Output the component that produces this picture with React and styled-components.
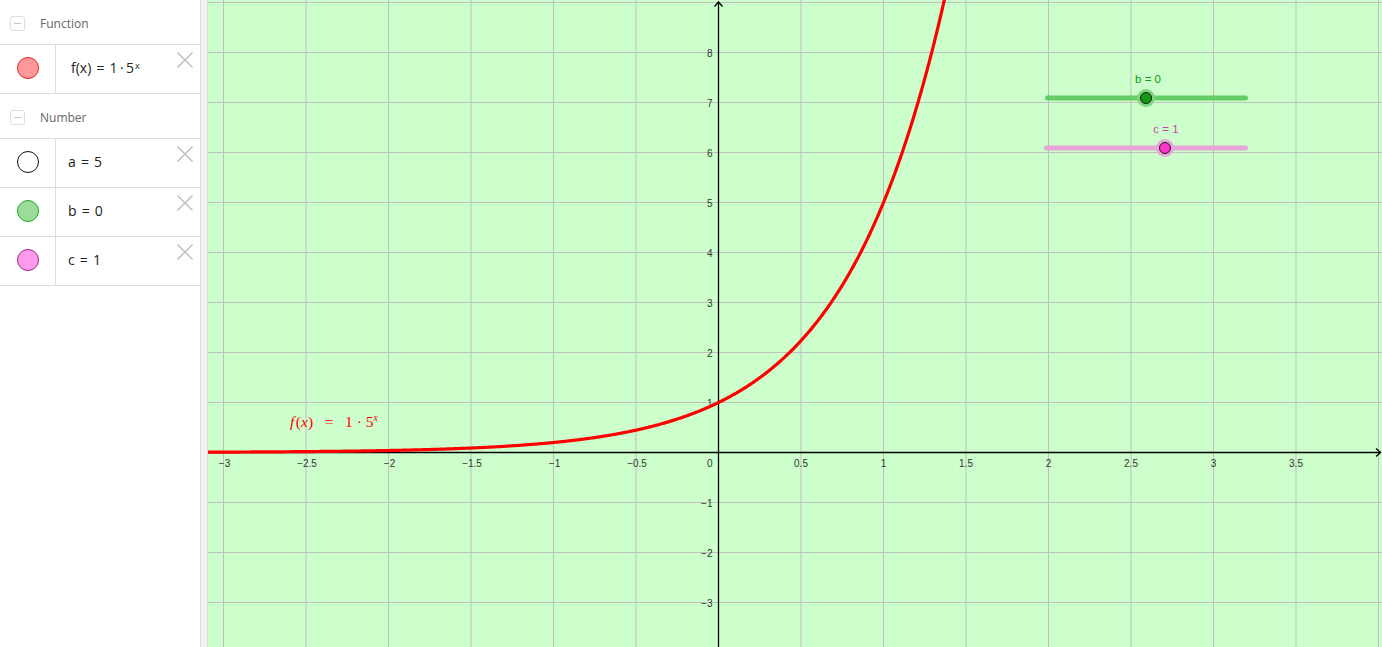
import styled, { createGlobalStyle } from "styled-components";

const GlobalStyle = createGlobalStyle`
  html, body {
    margin: 0;
    padding: 0;
    overflow: hidden;
    background: #ffffff;
  }
  * { box-sizing: border-box; }
`;

const Page = styled.div`
  display: flex;
  width: 100vw;
  height: 100vh;
  font-family: "Open Sans", "Liberation Sans", sans-serif;
`;

const Algebra = styled.div`
  width: 200px;
  flex-shrink: 0;
  background: #ffffff;
  display: flex;
  flex-direction: column;
`;

const Divider = styled.div`
  width: 8px;
  flex-shrink: 0;
  background: #f3f3f3;
  border-left: 1px solid #dcdcdc;
  border-right: 1px solid #dcdcdc;
`;

const GraphView = styled.div`
  flex: 1;
  background: #ccffcc;
  overflow: hidden;
`;

const GroupHeader = styled.div`
  height: 45px;
  display: flex;
  align-items: center;
  gap: 15px;
  padding: 2px 0 0 10px;
  border-bottom: 1px solid #dddddd;
  font-size: 12px;
  color: #666666;
`;

const Collapse = styled.span`
  width: 15px;
  height: 15px;
  border: 1px solid #dedede;
  border-radius: 3px;
  display: flex;
  align-items: center;
  justify-content: center;

  &::after {
    content: "";
    width: 7px;
    height: 1px;
    background: #c4c4c4;
  }
`;

const Item = styled.div`
  height: 49px;
  display: flex;
  border-bottom: 1px solid #dddddd;
  position: relative;
`;

const Marble = styled.div`
  width: 56px;
  flex-shrink: 0;
  border-right: 1px solid #dddddd;
  display: flex;
  align-items: flex-start;
  justify-content: center;
  padding-top: 12px;

  &::before {
    content: "";
    width: 20px;
    height: 20px;
    border-radius: 50%;
    background: ${(p) => p.$fill};
    border: 1px solid ${(p) => p.$stroke};
  }
`;

const Formula = styled.div`
  flex: 1;
  display: flex;
  align-items: center;
  padding: 0 0 4px ${(p) => p.$pad || 12}px;
  font-size: 14px;
  color: #222222;
  white-space: pre;
  word-spacing: 1.5px;

  sup {
    font-size: 9px;
    position: relative;
    top: -2px;
    margin-left: 1px;
  }
`;

const Delete = styled.button`
  position: absolute;
  top: 6px;
  right: 6px;
  width: 18px;
  height: 18px;
  padding: 0;
  border: none;
  background: none;
  display: flex;
`;

const CloseIcon = () => (
  <svg width="18" height="18" viewBox="0 0 18 18">
    <path d="M1.5 1.5 L16.5 16.5 M16.5 1.5 L1.5 16.5" stroke="#c2c2c2" strokeWidth="1.6" fill="none" />
  </svg>
);

const items = {
  fn: [{ id: "f", fill: "#ff9999", stroke: "#e22020", pad: 15, text: <>f(x) = 1{"\u2009·\u2009"}5<sup>x</sup></> }],
  num: [
    { id: "a", fill: "#ffffff", stroke: "#111111", text: "a = 5" },
    { id: "b", fill: "#99dd99", stroke: "#22aa22", text: "b = 0" },
    { id: "c", fill: "#ff99ee", stroke: "#a0208a", text: "c = 1" },
  ],
};

const Row = ({ item }) => (
  <Item>
    <Marble $fill={item.fill} $stroke={item.stroke} />
    <Formula $pad={item.pad}>{item.text}</Formula>
    <Delete aria-label="delete">
      <CloseIcon />
    </Delete>
  </Item>
);

// graph geometry (local to the graph view)
const W = 1174;
const H = 647;
const OX = 510.5;
const OY = 452.5;
const UX = 165;
const UY = 50;

const fmt = (v) => (v < 0 ? "\u2212" + String(-v) : String(v));

const curve = () => {
  const pts = [];
  for (let x = -3.2; x <= 1.4; x += 0.005) {
    const y = Math.pow(5, x);
    pts.push(`${(OX + x * UX).toFixed(2)},${(OY - y * UY).toFixed(2)}`);
  }
  return "M" + pts.join(" L");
};

const Slider = ({ x1, x2, y, px, label, line, halo, fill, color, lx }) => (
  <g>
    <line x1={x1} y1={y} x2={x2} y2={y} stroke={line} strokeWidth="5" strokeLinecap="round" />
    <circle cx={px} cy={y} r="9" fill={halo} />
    <circle cx={px} cy={y} r="5.5" fill={fill} stroke="#1a1a1a" strokeWidth="1" />
    <text x={lx} y={y - 15} textAnchor="middle" fontSize="11.5" fill={color} fontFamily="Liberation Sans, sans-serif">
      {label}
    </text>
  </g>
);

const Graph = () => {
  const vLines = [];
  for (let k = -7; k <= 8; k++) {
    const x = OX + k * (UX / 2);
    if (x > 0 && x < W && k !== 0) vLines.push({ x, v: k / 2 });
  }
  const hLines = [];
  for (let k = -3; k <= 9; k++) {
    const y = OY - k * UY;
    if (k !== 0) hLines.push({ y, v: k });
  }
  return (
    <svg width={W} height={H} viewBox={`0 0 ${W} ${H}`} style={{ display: "block" }}>
      <rect width={W} height={H} fill="#ccffcc" />
      {vLines.map((l) => (
        <line key={"v" + l.v} x1={l.x} y1="0" x2={l.x} y2={H} stroke="#c0c0c0" strokeWidth="1" />
      ))}
      {hLines.map((l) => (
        <line key={"h" + l.v} x1="0" y1={l.y} x2={W} y2={l.y} stroke="#c0c0c0" strokeWidth="1" />
      ))}
      <g stroke="#000" strokeWidth="1.3" fill="none">
        <line x1="0" y1={OY} x2={W - 1} y2={OY} />
        <line x1={OX} y1={H} x2={OX} y2="1.5" />
        <path d={`M${OX - 4} 6.5 L${OX} 2 L${OX + 4} 6.5`} />
        <path d={`M${W - 6} ${OY - 4} L${W - 1.5} ${OY} L${W - 6} ${OY + 4}`} />
      </g>
      <g fontSize="10" fill="#333" fontFamily="Liberation Sans, sans-serif">
        {vLines
          .filter((l) => l.v <= 3.5)
          .map((l) => (
            <text key={"tx" + l.v} x={l.x + (l.v < 0 ? 1 : 0)} y={OY + 14} textAnchor="middle">
              {fmt(l.v)}
            </text>
          ))}
        {hLines
          .filter((l) => l.v <= 8)
          .map((l) => (
            <text key={"ty" + l.v} x={OX - 6} y={l.y + 4} textAnchor="end">
              {fmt(l.v)}
            </text>
          ))}
        <text x={OX - 6} y={OY + 14} textAnchor="end">0</text>
      </g>
      <path d={curve()} stroke="#ff0000" strokeWidth="3.2" fill="none" strokeLinejoin="round" />
      <text x="82" y="427" fontSize="15.5" fill="#ff0000" fontFamily="Liberation Serif, serif" xmlSpace="preserve">
        <tspan fontStyle="italic">f</tspan>
        <tspan dx="1.5">(</tspan>
        <tspan fontStyle="italic">x</tspan>
        <tspan>)   =   1 · 5</tspan>
        <tspan fontStyle="italic" fontSize="10" dy="-6">x</tspan>
      </text>
      <Slider
        x1={839.5} x2={1037.5} y={98} px={938} lx={940}
        label="b = 0" line="#66cc66" halo="#7fd47f" fill="#139913" color="#119911"
      />
      <Slider
        x1={838.5} x2={1037.5} y={148} px={957} lx={958}
        label="c = 1" line="#e8a6d8" halo="#e8a6d8" fill="#ff33cc" color="#cc44aa"
      />
    </svg>
  );
};

export default function App() {
  return (
    <>
      <GlobalStyle />
      <Page>
        <Algebra>
          <GroupHeader>
            <Collapse />
            Function
          </GroupHeader>
          {items.fn.map((it) => (
            <Row key={it.id} item={it} />
          ))}
          <GroupHeader>
            <Collapse />
            Number
          </GroupHeader>
          {items.num.map((it) => (
            <Row key={it.id} item={it} />
          ))}
        </Algebra>
        <Divider />
        <GraphView>
          <Graph />
        </GraphView>
      </Page>
    </>
  );
}
